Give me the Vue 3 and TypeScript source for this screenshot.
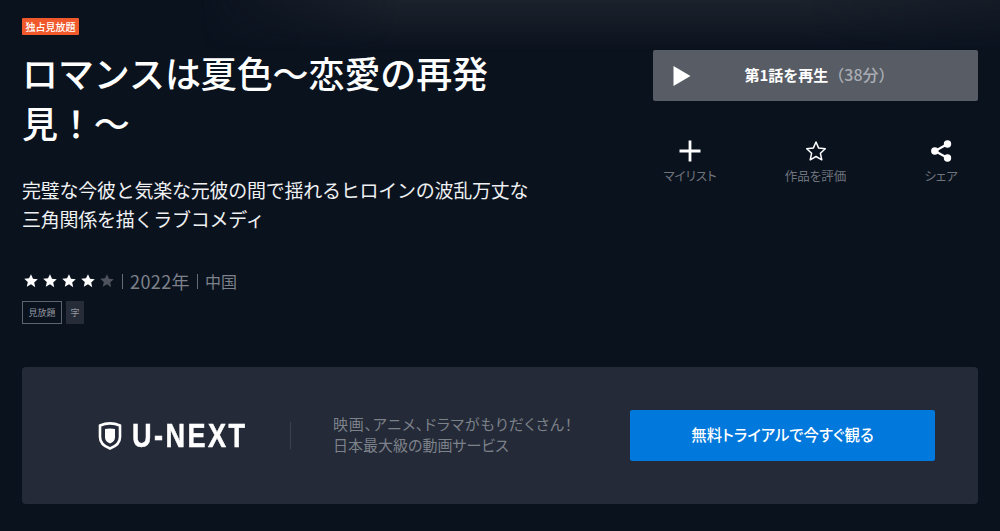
<script setup lang="ts">
const filled = [1, 2, 3, 4];
const star = "M12 1.800l3 6.700 7.200.8-5.400 4.900 1.500 7.200L12 17l-6.300 3.600 1.500-7.200-5.400-4.900 7.200-.8z";
</script>

<template>
  <div class="page">
    <div class="glow"></div>
    <div class="hero">
      <div class="left">
        <span class="badge">独占見放題</span>
        <h1 class="title">ロマンスは夏色～恋愛の再発見！～</h1>
        <p class="desc">完璧な今彼と気楽な元彼の間で揺れるヒロインの波乱万丈な<br />三角関係を描くラブコメディ</p>
        <div class="meta">
          <span class="stars">
            <svg v-for="n in filled" :key="n" class="star" viewBox="0 0 24 24"><path :d="star" fill="#fff" /></svg>
            <svg class="star" viewBox="0 0 24 24"><path :d="star" fill="#4d525c" /></svg>
          </span>
          <i class="sep"></i><span class="year">2022年</span><i class="sep"></i><span>中国</span>
        </div>
        <div class="tags">
          <span class="tag outline">見放題</span>
          <span class="tag solid">字</span>
        </div>
      </div>
      <div class="right">
        <button class="play">
          <svg class="play-icon" viewBox="0 0 18 20"><path d="M0.500 0 L17.500 10 L0.500 20 Z" fill="#fff" /></svg>
          <span class="play-text">第1話を再生<span class="dur">（38分）</span></span>
        </button>
        <div class="actions">
          <div class="action">
            <svg class="ic" viewBox="0 0 24 24"><path d="M12 1.500v21M1.500 12h21" stroke="#fff" stroke-width="2.800" fill="none" /></svg>
            <span>マイリスト</span>
          </div>
          <div class="action">
            <svg class="ic" viewBox="0 0 24 24"><path d="M12 3l2.700 6.100 6.600.7-4.900 4.500 1.400 6.500L12 17.500l-5.800 3.300 1.400-6.500-4.900-4.500 6.600-.7z" stroke="#fff" stroke-width="1.500" fill="none" stroke-linejoin="round" /></svg>
            <span>作品を評価</span>
          </div>
          <div class="action">
            <svg class="ic" viewBox="0 0 24 24"><path d="M18.500 5L6 12l12.500 7" stroke="#fff" stroke-width="2.200" fill="none" /><circle cx="18.500" cy="5" r="3.700" fill="#fff" /><circle cx="5.800" cy="12" r="3.700" fill="#fff" /><circle cx="18.500" cy="19" r="3.700" fill="#fff" /></svg>
            <span>シェア</span>
          </div>
        </div>
      </div>
    </div>
    <div class="promo">
      <div class="logo">
        <svg class="shield" viewBox="0 0 24 28"><path d="M2 3.500C8 1 16 1 22 3.500V15c0 6-4.500 9.500-10 11.500C6.500 24.500 2 21 2 15z" fill="none" stroke="#fff" stroke-width="2.600" /><path d="M7 7c3-.8 7-.8 10 0v8.500c0 3-2.300 4.800-5 6-2.700-1.200-5-3-5-6z" fill="#fff" /></svg>
        <span class="wordmark">U-NEXT</span>
      </div>
      <i class="divider"></i>
      <p class="copy"><span class="copy-first">映画、アニメ、ドラマがもりだくさん！</span><br />日本最大級の動画サービス</p>
      <button class="cta"><span class="cta-label">無料トライアルで今すぐ観る</span></button>
    </div>
  </div>
</template>

<style>
html, body { margin: 0; background: #0a121e; }
</style>

<style scoped>
.page {
  position: relative;
  width: 1000px;
  height: 531px;
  overflow: hidden;
  background: #0a121e;
  font-family: "Noto Sans CJK JP", "Noto Sans", sans-serif;
  color: #fff;
}
.glow {
  position: absolute;
  left: 200px;
  top: 0;
  width: 800px;
  height: 52px;
  background: linear-gradient(to bottom, rgba(45, 50, 58, 0.5), rgba(10, 18, 30, 0));
  -webkit-mask-image: linear-gradient(to right, transparent, #000 25%, #000 75%, rgba(0, 0, 0, 0.6));
  mask-image: linear-gradient(to right, transparent, #000 25%, #000 75%, rgba(0, 0, 0, 0.6));
}
.hero {
  position: relative;
  display: flex;
  justify-content: space-between;
  height: 367px;
  padding: 18px 22px 0;
  box-sizing: border-box;
}
.left { width: 540px; }
.badge {
  display: block;
  width: 57px;
  height: 17px;
  line-height: 17px;
  text-align: center;
  font-size: 10px;
  font-weight: 500;
  border-radius: 1px;
  background: #f0592b;
}
.title {
  width: 480px;
  margin: 12px 0 0;
  font-size: 36px;
  line-height: 50px;
  font-weight: 500;
  letter-spacing: -0.1px;
}
.desc {
  margin: 28px 0 0;
  font-size: 19px;
  line-height: 29px;
  color: #eef0f2;
  white-space: nowrap;
  letter-spacing: -0.25px;
}
.meta {
  display: flex;
  align-items: center;
  margin-top: 36px;
  height: 24px;
  font-size: 16px;
  color: #7c818a;
}
.stars { display: flex; gap: 3px; padding-left: 1px; }
.star { width: 16px; height: 16px; display: block; }
.sep {
  width: 1px;
  height: 15px;
  margin: 0 7px;
  background: #666b75;
}
.stars + .sep { margin-left: 7px; }
.year { font-size: 18px; letter-spacing: 0.4px; }
.tags { display: flex; gap: 4px; margin-top: 8px; }
.tag {
  height: 23px;
  line-height: 23px;
  font-size: 9px;
  color: #9498a0;
  box-sizing: border-box;
  text-align: center;
}
.outline { width: 40px; border: 1px solid #5e636d; line-height: 21px; }
.solid { width: 18px; background: #262c38; }
.right { width: 325px; padding-top: 32px; }
.play {
  display: flex;
  align-items: center;
  position: relative;
  width: 325px;
  height: 51px;
  padding: 0 0 3px;
  border: 0;
  border-radius: 2px;
  background: #575c65;
  color: #fff;
  font-family: inherit;
  font-size: 15px;
  font-weight: 700;
}
.play-icon { position: absolute; left: 20px; top: 16px; width: 18px; height: 20px; }
.play-text { width: 100%; text-align: center; padding-left: 8px; box-sizing: border-box; }
.dur { color: #a9adb3; font-weight: 500; font-size: 16px; }
.actions {
  display: flex;
  justify-content: space-between;
  margin-top: 38px;
}
.action {
  display: flex;
  flex-direction: column;
  align-items: center;
  gap: 4px;
  width: 74px;
  font-size: 12.5px;
  line-height: 18px;
  color: #6f747d;
  font-feature-settings: "palt";
}
.ic { width: 24px; height: 24px; display: block; }
.promo {
  position: relative;
  display: flex;
  align-items: center;
  width: 956px;
  height: 137px;
  margin-left: 22px;
  border-radius: 4px;
  background: #242a37;
}
.logo { display: flex; align-items: center; gap: 10px; margin-left: 76px; }
.shield { width: 24px; height: 28px; display: block; }
.wordmark {
  font-family: "Liberation Sans", sans-serif;
  font-size: 33px;
  line-height: 30px;
  font-weight: 700;
  letter-spacing: 3px;
  -webkit-text-stroke: 0.5px #fff;
  transform: scaleX(0.82);
  transform-origin: left center;
  width: 114px;
  white-space: nowrap;
}
.divider { width: 1px; height: 27px; margin-left: 44px; background: #3b414d; }
.copy {
  margin: 0 0 4px 42px;
  width: 297px;
  font-size: 15px;
  line-height: 21px;
  color: #7c818a;
  font-feature-settings: "palt";
}
.copy-first { letter-spacing: 0.8px; }
.cta {
  width: 305px;
  height: 51px;
  padding: 0 0 3px;
  border: 0;
  border-radius: 2px;
  background: #0078dc;
  color: #fff;
  font-family: inherit;
  font-size: 15.4px;
  font-weight: 500;
  font-feature-settings: "palt";
}
</style>
